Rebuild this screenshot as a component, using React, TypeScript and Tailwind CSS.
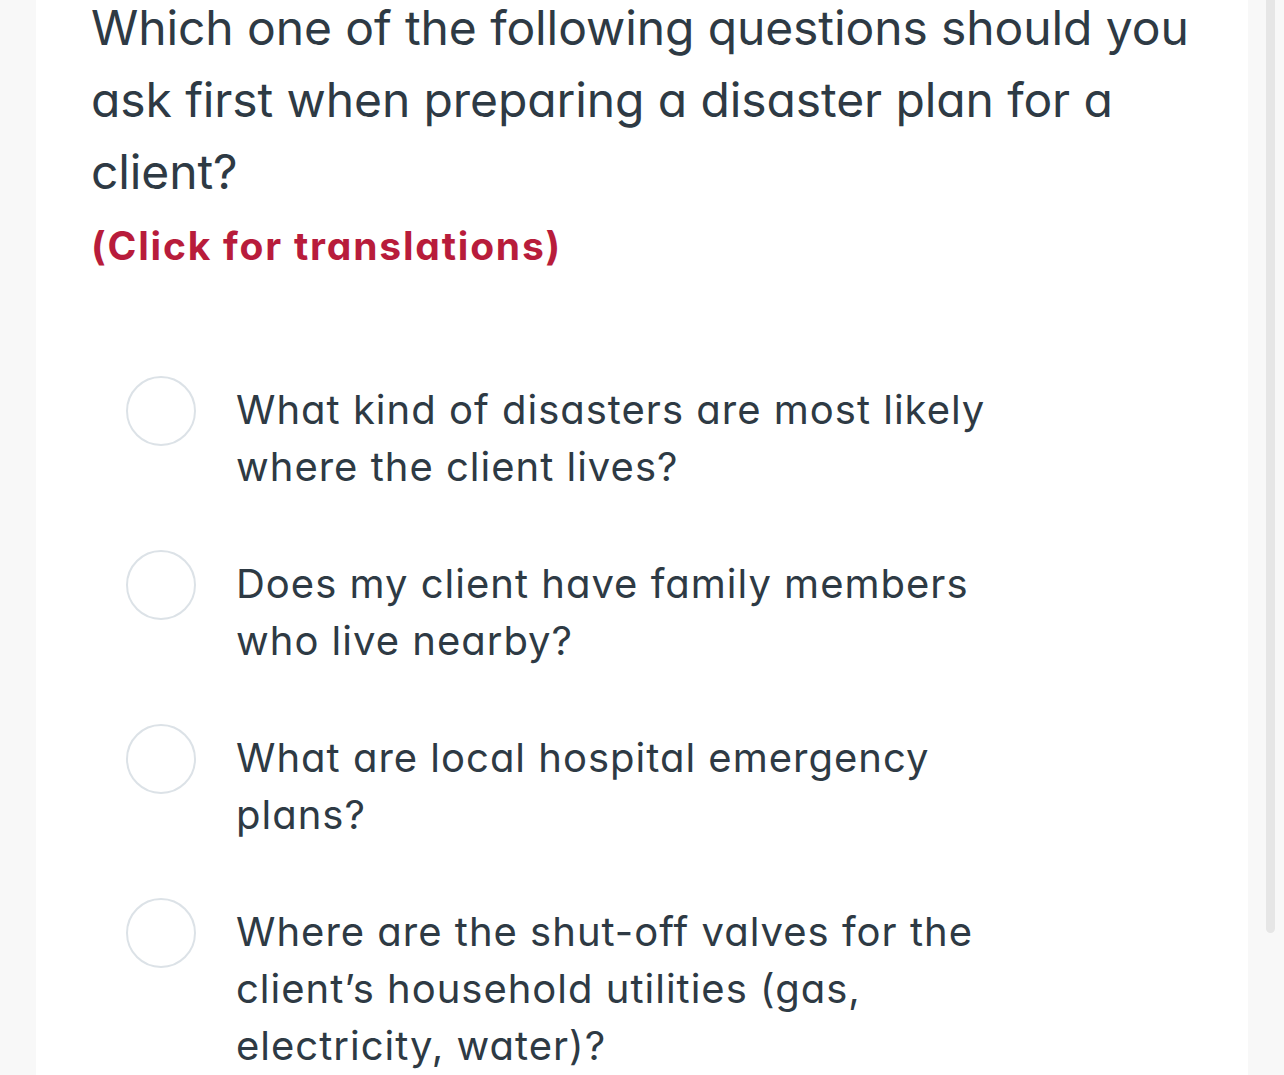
import React from "react";

const options = [
  "What kind of disasters are most likely where the client lives?",
  "Does my client have family members who live nearby?",
  "What are local hospital emergency plans?",
  "Where are the shut-off valves for the client\u2019s household utilities (gas, electricity, water)?",
];

export default function App() {
  return (
    <div
      className="relative h-[1075px] overflow-hidden bg-[#f8f8f8] [font-feature-settings:'cv11']"
      style={{ fontFamily: "Inter, 'Noto Sans', sans-serif" }}
    >
      <div className="mx-[36px] flex h-full flex-col bg-white px-[55px]">
        <h1 className="-mt-[8px] text-[48px] leading-[72px] font-normal text-[#2e3a44] tracking-[-0.1px]">
          Which one of the following questions should you ask first when preparing a disaster plan for a client?
        </h1>
        <button className="mt-[10px] block self-start text-left text-[39px] leading-[56px] font-bold tracking-[1.8px] text-[#b81c3b]">
          (Click for translations)
        </button>
        <div className="mt-[107px] flex flex-col gap-[60px] pl-[35px]">
          {options.map((o) => (
            <label key={o} className="flex items-start gap-[40px] cursor-pointer">
              <span className="mt-[-5px] h-[70px] w-[70px] shrink-0 rounded-full border-[2.5px] border-[#dce2e7] bg-white" />
              <span className="w-[775px] text-[40px] leading-[57px] tracking-[1px] text-[#2e3a44]">{o}</span>
            </label>
          ))}
        </div>
      </div>
      <div className="absolute right-[9px] top-0 h-[933px] w-[9px] rounded-b-full bg-[#e6e6e6]" />
    </div>
  );
}
